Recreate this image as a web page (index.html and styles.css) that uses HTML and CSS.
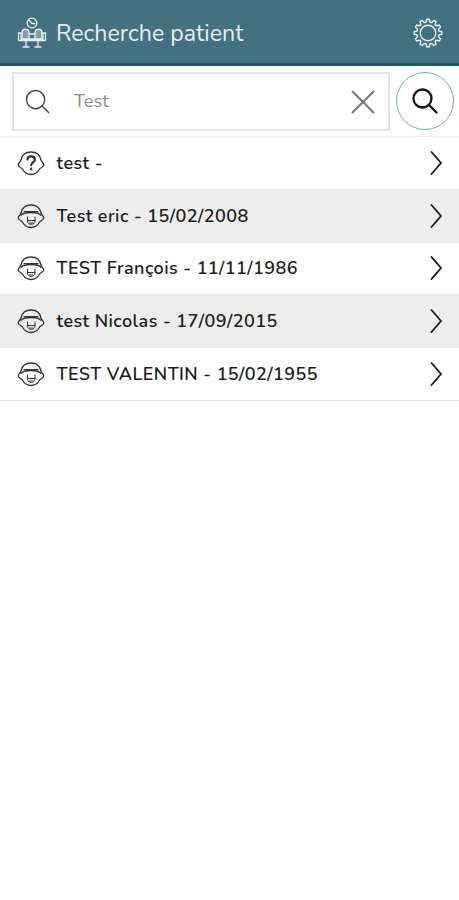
FILE: index.html
```html
<!DOCTYPE html>
<html lang="fr">
  <head>
    <meta charset="UTF-8" />
    <meta name="viewport" content="width=device-width, initial-scale=1.0" />
    <title>Recherche patient</title>
    <link rel="stylesheet" href="styles.css">
  </head>
  <body>
    <!-- Shared icons -->
    <svg class="sprite">
      <symbol id="face" viewBox="0 0 28 26">
        <path d="M4 10C5 5 9 2 14 2s9 3 10 8c.3 1.500 2.800 3.300 2.800 5s-2.500 2.500-3.800 3.500c-2 3.500-4.500 6-9 6s-7-2.500-9-6c-1.300-1-3.800-1.800-3.800-3.500s2.500-3.500 2.800-5z" />
      </symbol>
      <symbol id="patient" viewBox="0 0 28 26">
        <use href="#face" width="28" height="26" />
        <path d="M4 12.500C6 8.500 22 8.500 24 12.500" />
        <path class="thin" d="M7 8.500h14M10.500 14v4c0 4.500 7.500 4.500 7.500 0v-4M10.500 17.500H18M12.500 20h3.500" />
      </symbol>
      <symbol id="chevron" viewBox="0 0 14 26">
        <path d="M2.500 2l9.500 11-9.500 11" />
      </symbol>
      <symbol id="tooth" viewBox="0 0 30 30">
        <path d="M12.100 4.400l1-.3.600-2.900h2.600l.6 2.900 1 .3" />
      </symbol>
    </svg>

    <header class="header">
      <svg class="logo" viewBox="0 0 30 32">
        <circle cx="15" cy="6" r="4.800" />
        <path d="M12 3l3 3.500h3" />
        <path class="person" d="M5 23v-7c0-5 7-5 7 0v7zM18 23v-7c0-5 7-5 7 0v7z" />
        <path d="M1.500 16h2.500v6h22v-6h2.500v7.500h-27zM12 17h6M9 24v6M21 24v6M6 30h6M18 30h6" />
      </svg>
      <h1>Recherche patient</h1>
      <svg class="gear" viewBox="0 0 30 30">
        <circle cx="15" cy="15" r="7.800" />
        <g id="teeth">
          <use href="#tooth" width="30" height="30" />
          <use href="#tooth" width="30" height="30" transform="rotate(30 15 15)" />
          <use href="#tooth" width="30" height="30" transform="rotate(60 15 15)" />
        </g>
        <use href="#teeth" transform="rotate(90 15 15)" />
        <use href="#teeth" transform="rotate(180 15 15)" />
        <use href="#teeth" transform="rotate(270 15 15)" />
      </svg>
    </header>

    <div class="search-bar">
      <div class="search-box">
        <svg class="glass" viewBox="0 0 26 26"><circle cx="11" cy="11" r="9.500" /><path d="M17.500 17.500l7 7" /></svg>
        <span class="search-text">Test</span>
        <svg class="clear" viewBox="0 0 24 24"><path d="M1.500 1.500l21 21M22.500 1.500l-21 21" /></svg>
      </div>
      <button class="search-btn" aria-label="Rechercher">
        <svg viewBox="0 0 26 26"><circle cx="10.500" cy="10.500" r="9" /><path d="M17 17l7.500 7.500" /></svg>
      </button>
    </div>

    <ul class="patients">
      <li>
        <svg class="avatar" viewBox="0 0 28 26">
          <use href="#face" width="28" height="26" />
          <path class="question" d="M10.500 9.500c.3-4.500 7.300-4 7.300.2 0 2.800-3.600 2.600-3.600 5.500M14.200 18.700v.6" />
        </svg>
        <span class="name">test -</span>
        <svg class="chevron"><use href="#chevron" /></svg>
      </li>
      <li>
        <svg class="avatar"><use href="#patient" /></svg>
        <span class="name">Test eric - 15/02/2008</span>
        <svg class="chevron"><use href="#chevron" /></svg>
      </li>
      <li>
        <svg class="avatar"><use href="#patient" /></svg>
        <span class="name">TEST François - 11/11/1986</span>
        <svg class="chevron"><use href="#chevron" /></svg>
      </li>
      <li>
        <svg class="avatar"><use href="#patient" /></svg>
        <span class="name">test Nicolas - 17/09/2015</span>
        <svg class="chevron"><use href="#chevron" /></svg>
      </li>
      <li>
        <svg class="avatar"><use href="#patient" /></svg>
        <span class="name">TEST VALENTIN - 15/02/1955</span>
        <svg class="chevron"><use href="#chevron" /></svg>
      </li>
    </ul>
  </body>
</html>
```
FILE: styles.css
```css
* {
  box-sizing: border-box;
}
body {
  margin: 0;
  background: #fff;
  font-family: Nunito, "Open Sans", sans-serif;
  color: #1c1c1c;
}
svg {
  flex-shrink: 0;
  fill: none;
  stroke: currentColor;
  stroke-linecap: round;
  stroke-linejoin: round;
}
.sprite {
  position: absolute;
  width: 0;
  height: 0;
}

/* Header */
.header {
  display: flex;
  align-items: center;
  height: 66px;
  padding: 0 16px 0 17px;
  background: #45707f;
  border-bottom: 3px solid #155d70;
  color: #e3f1f5;
}
.header h1 {
  flex: 1;
  margin: 4px 0 0 9px;
  font-size: 23.2px;
  font-weight: 400;
  line-height: 32px;
}
.logo {
  width: 30px;
  height: 32px;
  margin-top: 3px;
  stroke-width: 1.3;
}
.logo .person {
  fill: #829da6;
}
.gear {
  width: 30px;
  height: 30px;
  margin-top: 3px;
  stroke-width: 1.4;
}

/* Search */
.search-bar {
  display: flex;
  align-items: center;
  height: 71px;
  padding: 0 5px 0 12px;
  border-bottom: 1px solid #ececec;
}
.search-box {
  display: flex;
  align-items: center;
  width: 378px;
  height: 59px;
  padding: 0 13px 0 11px;
  border: 2px solid #e2e3e4;
}
.glass {
  width: 25px;
  height: 25px;
  margin-top: 1px;
  color: #444;
  stroke-width: 1.5;
}
.search-text {
  flex: 1;
  margin: 0 0 2px 24px;
  color: #8c8c8c;
  font-size: 18.4px;
}
.clear {
  width: 24px;
  height: 24px;
  margin-top: 2px;
  color: #777;
  stroke-width: 2;
}
.search-btn {
  display: flex;
  align-items: center;
  justify-content: center;
  width: 58px;
  height: 58px;
  margin-left: 6px;
  padding: 0;
  background: #fff;
  border: 1px solid #6bb5a0;
  border-radius: 50%;
  color: #111;
}
.search-btn svg {
  width: 26px;
  height: 26px;
  stroke-width: 2.3;
}

/* Results */
.patients {
  margin: 0;
  padding: 0;
  list-style: none;
  border-bottom: 1px solid #e4e4e4;
}
.patients li {
  display: flex;
  align-items: center;
  height: 51.6px;
  padding: 0 16px 0 17px;
}
.patients li:nth-child(even) {
  height: 54px;
  background: #ededed;
}
.avatar {
  width: 28px;
  height: 26px;
  color: #333;
  stroke-width: 1.3;
}
.thin {
  stroke-width: 1;
}
.question {
  stroke-width: 2.2;
}
.name {
  flex: 1;
  margin-left: 11.5px;
  font-size: 18px;
  font-weight: 600;
  letter-spacing: 0.43px;
  white-space: nowrap;
}
.chevron {
  width: 14px;
  height: 26px;
  stroke-width: 1.9;
}
```
